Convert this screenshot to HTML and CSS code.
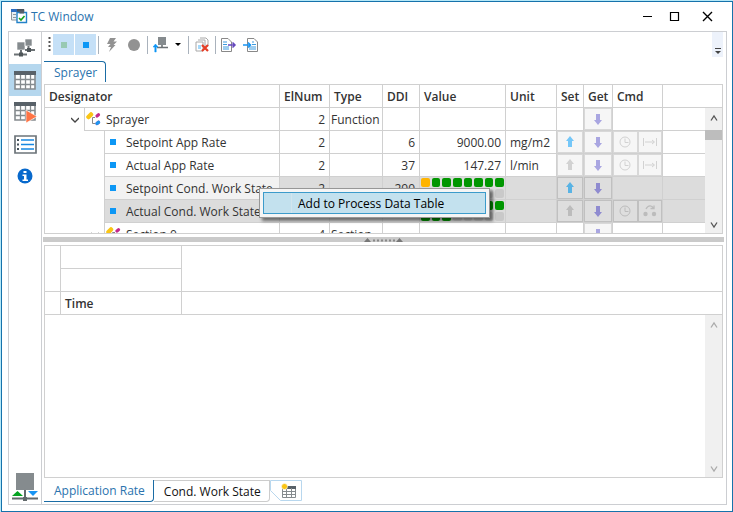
FILE: index.html
```html
<!DOCTYPE html>
<html lang="en">
<head>
<meta charset="utf-8">
<title>TC Window</title>
<link rel="stylesheet" href="styles.css">
</head>
<body>
<svg class="defs" aria-hidden="true">
  <symbol id="up" viewBox="0 0 8 12"><path d="M4 0L8 5H6V11H2V5H0Z"/></symbol>
  <symbol id="down" viewBox="0 0 8 12"><path d="M4 12L8 7H6V1H2V7H0Z"/></symbol>
  <symbol id="clock" viewBox="0 0 12 12"><circle cx="6" cy="6" r="5" fill="none" stroke="currentColor"/><path d="M6 2.500V6.500H9.500" fill="none" stroke="currentColor"/></symbol>
  <symbol id="span" viewBox="0 0 14 10"><path d="M.5 1V9M13.500 1V9M2 5H11M9 3L11.500 5L9 7" fill="none" stroke="currentColor"/></symbol>
  <symbol id="change" viewBox="0 0 14 12"><circle cx="2.500" cy="9" r="2.200"/><circle cx="11" cy="9" r="2.200"/><path d="M3 4C5 0 9 0 10.500 3.500M7.500 3.500H11V.5" fill="none" stroke="currentColor" stroke-width="1.300"/></symbol>
  <symbol id="node" viewBox="0 0 16 14"><path d="M2.500 5L5 2.500" stroke="#fac515" stroke-width="4.500" stroke-linecap="round"/><path d="M11 4L12.500 2.800M11 11.500L12.500 10.300" stroke="#c2298a" stroke-width="3.200" stroke-linecap="round"/><path d="M11 11.500L12.500 10.300" stroke="#1f95ee" stroke-width="3.400" stroke-linecap="round"/><path d="M9 5.500H6.500V11.500H9" fill="none" stroke="#888"/></symbol>
</svg>
<div class="window">
  <header class="titlebar">
    <svg class="app-icon" width="17" height="15" viewBox="0 0 17 15"><path d="M.5.5H13V11H.5Z" fill="#e8eef2" stroke="#8c969c"/><path d="M0 0H6V3H0Z" fill="#2b6dc0"/><path d="M6 0H13V3H6Z" fill="#4a5560"/><path d="M2 5.500H5M2 8.500H5" stroke="#8c969c"/><path d="M6 3.500H15.500V13.500H6Z" fill="#fff" stroke="#2482c8" stroke-width="1.400"/><path d="M8.500 1.500H13V4.500H8.500Z" fill="#56616b"/><path d="M8 9L10 11L13.500 7" fill="none" stroke="#18a11d" stroke-width="1.600"/></svg>
    <h1>TC Window</h1>
    <button class="caption" aria-label="Minimize"><svg width="11" height="11"><path d="M1 5.500H10" stroke="#000"/></svg></button>
    <button class="caption" aria-label="Maximize"><svg width="11" height="11"><path d="M1.500 1.500H9.500V9.500H1.500Z" fill="none" stroke="#000" stroke-width="1.200"/></svg></button>
    <button class="caption close" aria-label="Close"><svg width="11" height="11"><path d="M1 1L10 10M10 1L1 10" stroke="#000" stroke-width="1.400"/></svg></button>
  </header>
  <div class="frame">
    <nav class="sidebar">
      <button aria-label="Network"><svg width="22" height="20" viewBox="0 0 22 20"><path d="M11 1H18V8H11ZM3 4H11V12H3Z" fill="#858b8e" stroke="#fff" stroke-width=".6"/><path d="M14.500 8V12M11 12H21M7 12V16M0 16.500H13" fill="none" stroke="#6c7275" stroke-width="2"/><path d="M13 10H17V14H13ZM5 14.500H9V18.500H5Z" fill="#4f5659"/></svg></button>
      <button class="active" aria-label="Data table"><svg width="22" height="19" viewBox="0 0 22 19"><path d="M1 1H21V18H1Z" fill="#fff" stroke="#858b8e" stroke-width="1.600"/><path d="M0 0H22V4H0Z" fill="#586168"/><path d="M1 8.500H21M1 13.500H21M6.500 4V18M11.500 4V18M16.500 4V18" stroke="#858b8e" stroke-width="1.300"/></svg></button>
      <button aria-label="Run table"><svg width="23" height="21" viewBox="0 0 23 21"><path d="M1 1H21V18H1Z" fill="#fff" stroke="#858b8e" stroke-width="1.600"/><path d="M0 0H22V4H0Z" fill="#586168"/><path d="M1 8.500H21M1 13.500H21M6.500 4V18M11.500 4V18M16.500 4V18" stroke="#858b8e" stroke-width="1.300"/><path d="M12 8L23 14.500L12 21Z" fill="#ff7445" stroke="#fff" stroke-width=".6"/></svg></button>
      <button aria-label="List"><svg width="23" height="19" viewBox="0 0 23 19"><path d="M1 1H22V18H1Z" fill="#fff" stroke="#6c7479" stroke-width="1.700"/><path d="M7 5H20M7 9.500H20M7 14H20" stroke="#1688e2" stroke-width="1.400"/><path d="M3 4H5V6H3ZM3 8.500H5V10.500H3ZM3 13H5V15H3Z" fill="#44515a"/></svg></button>
      <button aria-label="Information"><svg width="16" height="16" viewBox="0 0 16 16"><circle cx="8" cy="8" r="7.500" fill="#0869cc"/><path d="M6.500 3H9.500V5H6.500ZM5.500 6.500H9.500V11.500H11V13H5.500V11.500H7V8H5.500Z" fill="#fff"/></svg></button>
      <button class="status" aria-label="Connection"><svg width="28" height="28" viewBox="0 0 28 28"><path d="M5 0H23V17H5Z" fill="#858b8e"/><path d="M14 17V25M1 25.500H27" stroke="#62696c" stroke-width="2"/><path d="M12 24H16V28H12Z" fill="#62696c"/><path d="M1 23L6.500 18L12 23Z" fill="#05a321"/><path d="M17 18H27L22 23Z" fill="#1794f4"/></svg></button>
    </nav>
    <main>
      <div class="toolbar" role="toolbar" aria-label="Data tools">
        <svg width="3" height="16" class="grip"><path d="M1.500 0V16" stroke="#555" stroke-width="2" stroke-dasharray="2 2"/></svg>
        <button class="toggle" aria-label="Show received"><i class="dot green"></i></button>
        <button class="toggle" aria-label="Show sent"><i class="dot"></i></button>
        <span class="sep"></span>
        <button aria-label="Trigger"><svg width="12" height="14" viewBox="0 0 12 14"><path d="M4 0H10L7.500 3.500H11L7.500 7H9.500L3 14L5 9H2L4.500 6H1Z" fill="#929292"/></svg></button>
        <button aria-label="Record"><svg width="14" height="14"><circle cx="7" cy="7" r="6" fill="#929292"/></svg></button>
        <span class="sep"></span>
        <button class="wide" aria-label="Send"><svg width="30" height="17" viewBox="0 0 30 17"><path d="M5 1H13V9H5Z" fill="#858b8e"/><path d="M9 9V12M4 11.500H15" stroke="#6c7275" stroke-width="1.600"/><path d="M0 11L2.500 8L5 11H3.200V16H1.800V11Z" fill="#0d95f5" stroke="#0d95f5" stroke-width=".5"/><path d="M22 7H28L25 10Z"/></svg></button>
        <span class="sep"></span>
        <button aria-label="Clear"><svg width="15" height="16" viewBox="0 0 15 16"><path d="M1 5H8V14H1ZM3 3H10V12M5 1H11L13 3V9" fill="none" stroke="#a8a8a8"/><path d="M3 8H6V12H3Z" fill="#a4d8fa"/><path d="M7 8L13 14M13 8L7 14" stroke="#e53d25" stroke-width="2.200"/></svg></button>
        <span class="sep"></span>
        <button aria-label="Export"><svg width="16" height="14" viewBox="0 0 16 14"><path d="M.5.5H7L10.500 4V13.500H.5Z" fill="#fff" stroke="#888"/><path d="M2 4H6M2 6.500H6M2 9H8M2 11H8" stroke="#3c9be0"/><path d="M7 7H14M11.500 4.500L14 7L11.500 9.500" fill="none" stroke="#6548bd" stroke-width="1.500"/></svg></button>
        <button aria-label="Import"><svg width="16" height="14" viewBox="0 0 16 14"><path d="M4.500.5H11L14.500 4V13.500H4.500Z" fill="#fff" stroke="#888"/><path d="M9 4H11M9 6.500H13M6 9H13M6 11H13" stroke="#3c9be0"/><path d="M0 7H7M5 4.500L7.500 7L5 9.500" fill="none" stroke="#1794f4" stroke-width="1.500"/></svg></button>
        <button class="overflow" aria-label="More tools"><svg width="6" height="6"><path d="M0 .5H6" stroke="#444"/><path d="M0 3H6L3 6Z" fill="#444"/></svg></button>
      </div>
      <div class="top-tabs"><button class="tab-top">Sprayer</button></div>
      <section class="pane upper">
        <table class="data">
          <colgroup><col class="c-name"><col class="c-num"><col class="c-type"><col class="c-ddi"><col class="c-value"><col class="c-unit"><col class="c-set"><col class="c-get"><col class="c-cmd"><col></colgroup>
          <thead><tr><th>Designator</th><th>ElNum</th><th>Type</th><th>DDI</th><th>Value</th><th>Unit</th><th>Set</th><th>Get</th><th>Cmd</th><th></th></tr></thead>
          <tbody>
            <tr><td class="tree"><div class="branch"><svg class="chev" width="8" height="6"><path d="M0 1L4 5L8 1" fill="none" stroke="#444" stroke-width="1.300"/></svg><div class="label"><svg width="16" height="14"><use href="#node"/></svg>Sprayer</div></div></td><td class="r">2</td><td class="type">Function</td><td></td><td></td><td></td><td></td><td><button class="act get" aria-label="Get"><svg><use href="#down"/></svg></button></td><td></td><td></td></tr>
            <tr><td class="tree"><div class="leaf"><i class="dot"></i>Setpoint App Rate</div></td><td class="r">2</td><td></td><td class="r">6</td><td class="r">9000.00</td><td>mg/m2</td><td><button class="act set" aria-label="Set"><svg><use href="#up"/></svg></button></td><td><button class="act get" aria-label="Get"><svg><use href="#down"/></svg></button></td><td><div class="pair"><button class="act" disabled aria-label="Time"><svg class="lg"><use href="#clock"/></svg></button><button class="act" disabled aria-label="Distance"><svg class="lg"><use href="#span"/></svg></button></div></td><td></td></tr>
            <tr><td class="tree"><div class="leaf"><i class="dot"></i>Actual App Rate</div></td><td class="r">2</td><td></td><td class="r">37</td><td class="r">147.27</td><td>l/min</td><td><button class="act" disabled aria-label="Set"><svg><use href="#up"/></svg></button></td><td><button class="act get" aria-label="Get"><svg><use href="#down"/></svg></button></td><td><div class="pair"><button class="act" disabled aria-label="Time"><svg class="lg"><use href="#clock"/></svg></button><button class="act" disabled aria-label="Distance"><svg class="lg"><use href="#span"/></svg></button></div></td><td></td></tr>
            <tr class="sel"><td class="tree"><div class="leaf focus"><i class="dot"></i>Setpoint Cond. Work State</div></td><td class="r">2</td><td></td><td class="r">290</td><td class="states"><div class="cells"><i class="o"></i><i class="g"></i><i class="g"></i><i class="g"></i><i class="g"></i><i class="g"></i><i class="g"></i><i class="g"></i><i class="g"></i><i class="g"></i><i class="g"></i><i></i><i></i><i></i><i></i><i></i></div></td><td></td><td><button class="act set" aria-label="Set"><svg><use href="#up"/></svg></button></td><td><button class="act get" aria-label="Get"><svg><use href="#down"/></svg></button></td><td></td><td></td></tr>
            <tr class="sel"><td class="tree"><div class="leaf"><i class="dot"></i>Actual Cond. Work State</div></td><td></td><td></td><td></td><td class="states"><div class="cells"><i class="g"></i><i class="g"></i><i class="g"></i><i class="g"></i><i class="g"></i><i class="g"></i><i class="g"></i><i class="g"></i><i class="g"></i><i class="g"></i><i class="g"></i><i></i><i></i><i></i><i></i><i></i></div></td><td></td><td><button class="act" disabled aria-label="Set"><svg><use href="#up"/></svg></button></td><td><button class="act get" aria-label="Get"><svg><use href="#down"/></svg></button></td><td><div class="pair"><button class="act" disabled aria-label="Time"><svg class="lg"><use href="#clock"/></svg></button><button class="act" disabled aria-label="On change"><svg class="lg"><use href="#change"/></svg></button></div></td><td></td></tr>
            <tr><td class="tree"><div class="branch deep"><svg class="chev" width="8" height="6"><path d="M0 1L4 5L8 1" fill="none" stroke="#444" stroke-width="1.300"/></svg><div class="label"><svg width="16" height="14"><use href="#node"/></svg>Section 0</div></div></td><td class="r">4</td><td class="type">Section</td><td></td><td></td><td></td><td></td><td><button class="act get" aria-label="Get"><svg><use href="#down"/></svg></button></td><td></td><td></td></tr>
          </tbody>
        </table>
        <div class="scroll on"><svg width="8" height="8"><path d="M1 6.500L4 2L7 6.500" fill="none" stroke="#555" stroke-width="1.300"/></svg><span class="thumb"></span><svg width="8" height="8"><path d="M1 1.500L4 6L7 1.500" fill="none" stroke="#555" stroke-width="1.300"/></svg></div>
      </section>
      <div class="splitter"><svg width="40" height="5"><path d="M0 5L3.500 1L7 5ZM32 5L35.500 1L39 5Z" fill="#777"/><path d="M9 3.500H31" stroke="#888" stroke-width="2" stroke-dasharray="2 2"/></svg></div>
      <section class="pane lower">
        <table class="log">
          <colgroup><col class="c-mark"><col class="c-time"><col></colgroup>
          <tr><td rowspan="2"></td><td></td><td rowspan="2"></td></tr>
          <tr><td></td></tr>
          <tr><td></td><th>Time</th><td></td></tr>
        </table>
        <div class="scroll"><svg width="8" height="8"><path d="M1 6.500L4 2L7 6.500" fill="none" stroke="#aaa" stroke-width="1.300"/></svg><svg width="8" height="8"><path d="M1 1.500L4 6L7 1.500" fill="none" stroke="#aaa" stroke-width="1.300"/></svg></div>
      </section>
      <div class="bottom-tabs">
        <button class="tab-bottom current">Application Rate</button>
        <button class="tab-bottom">Cond. Work State</button>
        <button class="tab-add" aria-label="Add table"><svg width="32" height="22" viewBox="0 0 32 22"><path d="M.5 10.500V.5H31.500V20.500H10.500L.5 10.500" fill="#fff" stroke="#b8d7ee"/><path d="M12.500 6.500H25.500V17.500H12.500Z" fill="#fff" stroke="#858b8e"/><path d="M12 6H26V9H12Z" fill="#586168"/><path d="M12 11.500H26M12 14.500H26M16.500 8V18M21.500 8V18" stroke="#858b8e"/><circle cx="14.500" cy="6.500" r="3" fill="#fac515" stroke="#fff" stroke-width=".6"/></svg></button>
      </div>
    </main>
  </div>
</div>
<div class="menu" role="menu"><button role="menuitem">Add to Process Data Table</button></div>
</body>
</html>
```
FILE: styles.css
```css
* { box-sizing: border-box; }
body { margin: 0; padding: 1px 0 0 1px; height: 100vh; background: #b4e8f8; color: #333; font: 12px/16px "Open Sans", "Noto Sans", sans-serif; overflow: hidden; }
button { font: inherit; color: inherit; background: none; border: 0; padding: 0; margin: 0; display: flex; align-items: center; justify-content: center; }
svg { display: block; flex: none; }
.defs { position: absolute; width: 0; height: 0; }
.window { height: 100%; background: #fff; border: 1px solid #1672ab; padding: 0 5px 6px 6px; display: flex; flex-direction: column; }

.titlebar { height: 29px; display: flex; align-items: center; flex: none; padding: 0 1px 0 3px; }
.titlebar h1 { flex: 1; margin: 0 0 0 3px; font-size: 12px; font-weight: 400; color: #2a73ae; }
.caption { width: 27px; height: 22px; }
.caption.close { width: 38px; }

.frame { flex: 1; min-height: 0; border: 1px solid #ccced2; display: flex; }
.sidebar { width: 33px; border-right: 1px solid #ccced2; display: flex; flex-direction: column; flex: none; }
.sidebar button { height: 32px; }
.sidebar .active { background: #b5d7ee; }
.sidebar .status { margin-top: auto; padding-bottom: 2px; }
main { flex: 1; min-width: 0; display: flex; flex-direction: column; padding: 0 3px 2px 2px; }

.toolbar { height: 25px; display: flex; align-items: center; padding: 0 0 0 4px; flex: none; }
.toolbar button { width: 22px; height: 21px; }
.toolbar .grip { margin-right: 2px; }
.toolbar .toggle { width: 21px; background: #c5e0f7; }
.toolbar .toggle + .toggle { margin-left: 1px; }
.toolbar .wide { width: 36px; }
.toolbar .overflow { width: 11px; height: 25px; margin-left: auto; background: #edf2fb; align-items: flex-end; padding-bottom: 3px; }
.sep { width: 1px; height: 18px; background: #a9b2bc; margin: 0 2px; }
.dot { width: 6px; height: 6px; background: #0d97f5; flex: none; }
.dot.green { background: #98c9b2; }

.top-tabs { height: 27px; padding-top: 4px; flex: none; display: flex; }
.tab-top { height: 21px; padding: 2px 8px 0 10px; border: solid #1a6ca5; border-width: 1px 1px 0 0; border-radius: 0 4px 0 0; color: #2a73ae; }
.pane { border: 1px solid #d0d0d0; position: relative; overflow: hidden; }
.upper { height: 150px; flex: none; }
.lower { flex: 1; min-height: 0; }
table { width: 100%; table-layout: fixed; border-spacing: 0; }
td, th { height: 23px; padding: 2px 4px 0; border: solid #d0d0d0; border-width: 0 1px 1px 0; white-space: nowrap; text-align: left; }
th { font-weight: 600; padding-right: 0; }
.data tr > :last-child, .log [rowspan]:last-child, .log th + td { border-right: 0; }
.c-name { width: 235px; }
.c-num { width: 50px; }
.c-type { width: 53px; }
.c-ddi { width: 37px; }
.c-value { width: 86px; }
.c-unit { width: 51px; }
.c-set { width: 27px; }
.c-get { width: 29px; }
.c-cmd { width: 50px; }
.data .r { text-align: right; }
.data .type { padding-left: 1px; }
.data td:nth-child(n+7) { padding: 0; }
.data .tree { padding: 0; border-bottom: 0; }
.branch { display: flex; height: 23px; padding-left: 26px; align-items: center; }
.branch.deep { padding-left: 46px; }
.label, .leaf { display: flex; align-items: center; height: 23px; padding-top: 2px; border: solid #d0d0d0; border-width: 0 0 1px 1px; }
.label { flex: 1; margin-left: 5px; gap: 4px; padding-left: 1px; }
.label svg { margin-bottom: 2px; }
.leaf { margin-left: 59px; padding-left: 5px; gap: 10px; }
.leaf .dot { margin-bottom: 2px; }
.sel td:not(.tree), .sel .leaf { background: #dcdcdc; }
.sel .leaf.focus { background: #f2f2f2; }
.act { width: 100%; height: 22px; background: #f6f6f6; border: 1px solid #d8d8d8; color: #0d97f5; fill: currentColor; }
.act svg { width: 8px; height: 12px; }
.act svg.lg { width: 14px; }
.act.set { color: #75c7f8; }
.act.get { color: #a9a6e1; }
.act:disabled { color: #d2d2d2; }
.sel .act { background: #dedede; border-color: #c0c0c0; }
.sel .act.set { color: #59b3e4; }
.sel .act.get { color: #8f8bd0; }
.sel .act:disabled { color: #bcbcbc; }
.pair { display: flex; }
.data td.states { padding: 0 1px; }
.cells { display: grid; grid-template-columns: repeat(8, 1fr); gap: 2px; }
.cells i { height: 9px; border-radius: 2px; background: #c9c9c9; }
.cells .g { background: #009600; }
.cells .o { background: #ffb400; }
.scroll { position: absolute; top: 23px; right: 0; bottom: 0; width: 17px; background: #f0f0f0; display: flex; flex-direction: column; align-items: center; justify-content: space-between; padding: 6px 0 4px; }
.scroll .thumb { width: 17px; height: 10px; background: #bdbdbd; margin: 8px 0 auto; }
.lower .scroll { top: 69px; }
.splitter { height: 5px; margin: 3px -1px; background: #cacaca; display: flex; justify-content: center; flex: none; }
.c-mark { width: 16px; }
.c-time { width: 121px; }

.bottom-tabs { display: flex; padding-top: 2px; flex: none; height: 24px; }
.tab-bottom { height: 22px; padding: 1px 8px 0 10px; border: solid #ccc; border-width: 1px 1px 1px 0; border-radius: 0 0 4px 0; color: #111; }
.tab-bottom.current { color: #2a73ae; border-color: #1a6ca5; border-top: 0; }

.menu { position: absolute; left: 259px; top: 188px; width: 231px; padding: 3px; border: 1px solid #979797; background: #f5f5f5; box-shadow: 3px 3px 3px rgba(0, 0, 0, .5); }
.menu button { width: 100%; height: 22px; padding: 1px 0 0 34px; border: 1px solid #3c9bcb; background: #c3e1ee linear-gradient(#d2e5ee, #d2e5ee) 27px 0 / 1px 100% no-repeat; color: #000; justify-content: flex-start; }
```
